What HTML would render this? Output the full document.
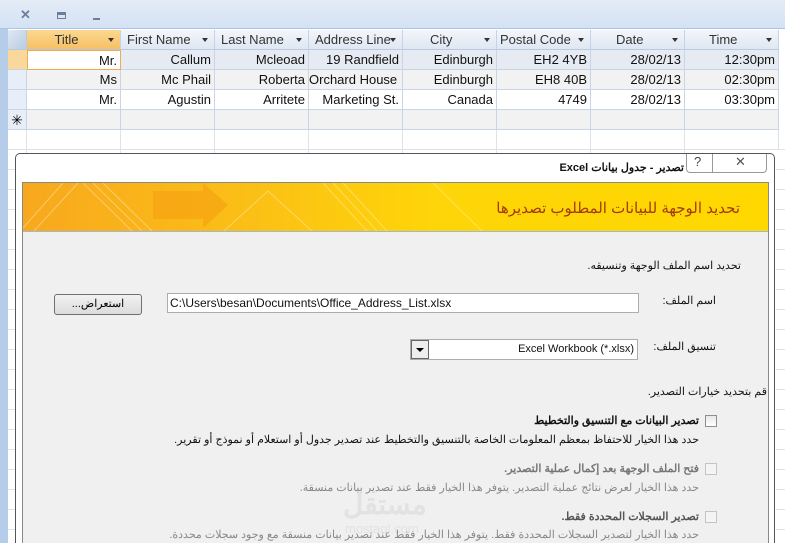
<!DOCTYPE html>
<html style="width:785px;height:543px;overflow:hidden"><head><meta charset="utf-8"><style>
*{margin:0;padding:0;box-sizing:border-box}
body{width:785px;height:543px;overflow:hidden;background:#fff;font-family:"Liberation Sans","Noto Sans CJK SC",sans-serif;position:relative}
.abs{position:absolute}
.top{left:0;top:0;width:785px;height:29px;background:linear-gradient(#e4ecf7,#d4e2f4);border-bottom:1px solid #a8c4e6}
.strip{left:0;top:29px;width:8px;height:514px;background:#b6cdea}
.hdr{top:30px;height:20px;background:linear-gradient(#f3f6fb,#dfe7f2);border-right:1px solid #c5d3e6;border-bottom:1px solid #b9c9de;font-size:13px;color:#333;line-height:19px;padding-left:6px}
.hdr:after{content:"";position:absolute;right:6px;top:8px;border:3.5px solid transparent;border-top:4px solid #333}
.c{height:20px;border-right:1px solid #c8d5e6;border-bottom:1px solid #c8d5e6;font-size:13px;line-height:19px;text-align:right;padding-right:3px;color:#111;white-space:nowrap;overflow:hidden}
.gl{left:8px;width:777px;height:1px;background:#dde3ea}
.vl{top:130px;width:1px;height:30px;background:#dde3ea}
.ar{font-family:"Liberation Sans","Noto Sans CJK SC",sans-serif;direction:rtl;font-size:11px;color:#111;white-space:nowrap;line-height:14px}
</style></head><body>
<div class="abs top"></div>
<div class="abs" style="left:20px;top:7px;font-size:13px;color:#6a7f9a;font-weight:bold">✕</div>
<div class="abs" style="left:57px;top:12px;width:9px;height:7px;border:1px solid #6a7f9a;border-top-width:3px"></div>
<div class="abs" style="left:93px;top:18px;width:7px;height:2px;background:#6a7f9a"></div>
<div class="abs strip"></div>
<div class="abs" style="left:8px;top:30px;width:19px;height:20px;background:linear-gradient(135deg,#dfe8f3,#b9cbe2);border-right:1px solid #b9c9de;border-bottom:1px solid #b9c9de"></div>
<div class="abs hdr" style="left:27px;width:94px;background:linear-gradient(#fbd88f,#f6c064);text-align:center;padding-left:0;padding-right:14px">Title</div>
<div class="abs hdr" style="left:121px;width:94px">First Name</div>
<div class="abs hdr" style="left:215px;width:94px">Last Name</div>
<div class="abs hdr" style="left:309px;width:94px;overflow:hidden;white-space:nowrap">Address Line</div>
<div class="abs hdr" style="left:403px;width:94px;padding-left:27px">City</div>
<div class="abs hdr" style="left:497px;width:94px;padding-left:3px">Postal Code</div>
<div class="abs hdr" style="left:591px;width:94px;padding-left:25px">Date</div>
<div class="abs hdr" style="left:685px;width:94px;padding-left:24px">Time</div>
<div class="abs" style="left:8px;top:50px;width:19px;height:20px;background:#fad79a;border-bottom:1px solid #c8d5e6"></div>
<div class="abs" style="left:8px;top:70px;width:19px;height:20px;background:#e8eef7;border-bottom:1px solid #c8d5e6;border-right:1px solid #c8d5e6"></div>
<div class="abs" style="left:8px;top:90px;width:19px;height:20px;background:#e8eef7;border-bottom:1px solid #c8d5e6;border-right:1px solid #c8d5e6"></div>
<div class="abs" style="left:8px;top:110px;width:19px;height:20px;background:#e8eef7;border-bottom:1px solid #c8d5e6;border-right:1px solid #c8d5e6;font-size:14px;text-align:center;line-height:20px">✳</div>
<div class="abs" style="left:27px;top:50px;width:752px;height:20px;background:#e6ebf3"></div>
<div class="abs" style="left:27px;top:70px;width:752px;height:20px;background:#f2f2f2"></div>
<div class="abs" style="left:27px;top:110px;width:752px;height:20px;background:#f2f2f2"></div>
<div class="abs c" style="left:27px;top:50px;width:94px;background:#fff;border:1px solid #f5a94d">Mr.</div>
<div class="abs c" style="left:121px;top:50px;width:94px">Callum</div>
<div class="abs c" style="left:215px;top:50px;width:94px">Mcleoad</div>
<div class="abs c" style="left:309px;top:50px;width:94px">19 Randfield</div>
<div class="abs c" style="left:403px;top:50px;width:94px">Edinburgh</div>
<div class="abs c" style="left:497px;top:50px;width:94px">EH2 4YB</div>
<div class="abs c" style="left:591px;top:50px;width:94px">28/02/13</div>
<div class="abs c" style="left:685px;top:50px;width:94px">12:30pm</div>
<div class="abs c" style="left:27px;top:70px;width:94px">Ms</div>
<div class="abs c" style="left:121px;top:70px;width:94px">Mc Phail</div>
<div class="abs c" style="left:215px;top:70px;width:94px">Roberta</div>
<div class="abs c" style="left:309px;top:70px;width:94px;text-align:left;padding-left:0">Orchard House</div>
<div class="abs c" style="left:403px;top:70px;width:94px">Edinburgh</div>
<div class="abs c" style="left:497px;top:70px;width:94px">EH8 40B</div>
<div class="abs c" style="left:591px;top:70px;width:94px">28/02/13</div>
<div class="abs c" style="left:685px;top:70px;width:94px">02:30pm</div>
<div class="abs c" style="left:27px;top:90px;width:94px">Mr.</div>
<div class="abs c" style="left:121px;top:90px;width:94px">Agustin</div>
<div class="abs c" style="left:215px;top:90px;width:94px">Arritete</div>
<div class="abs c" style="left:309px;top:90px;width:94px">Marketing St.</div>
<div class="abs c" style="left:403px;top:90px;width:94px">Canada</div>
<div class="abs c" style="left:497px;top:90px;width:94px">4749</div>
<div class="abs c" style="left:591px;top:90px;width:94px">28/02/13</div>
<div class="abs c" style="left:685px;top:90px;width:94px">03:30pm</div>
<div class="abs c" style="left:27px;top:110px;width:94px"></div><div class="abs c" style="left:121px;top:110px;width:94px"></div><div class="abs c" style="left:215px;top:110px;width:94px"></div><div class="abs c" style="left:309px;top:110px;width:94px"></div><div class="abs c" style="left:403px;top:110px;width:94px"></div><div class="abs c" style="left:497px;top:110px;width:94px"></div><div class="abs c" style="left:591px;top:110px;width:94px"></div><div class="abs c" style="left:685px;top:110px;width:94px"></div>
<div class="abs vl" style="left:26px"></div><div class="abs vl" style="left:120px"></div><div class="abs vl" style="left:214px"></div><div class="abs vl" style="left:308px"></div><div class="abs vl" style="left:402px"></div><div class="abs vl" style="left:496px"></div><div class="abs vl" style="left:590px"></div><div class="abs vl" style="left:684px"></div><div class="abs vl" style="left:778px"></div>
<div class="abs gl" style="top:149px"></div>
<div class="abs" style="left:776px;top:150px;width:9px;height:393px;background:repeating-linear-gradient(#fff 0 19px,#dde3ea 19px 20px)"></div>
<div class="abs" style="left:8px;top:150px;width:8px;height:393px;background:repeating-linear-gradient(#fff 0 19px,#dde3ea 19px 20px)"></div>
<div class="abs" style="left:15px;top:153px;width:760px;height:390px;background:#fff;border:1px solid #555;border-bottom:none;border-radius:5px 5px 0 0"></div>
<div class="abs" style="left:686px;top:154px;width:81px;height:19px;border:1px solid #999;border-top:none;border-radius:0 0 4px 4px;background:#fff"></div>
<div class="abs" style="left:712px;top:154px;width:1px;height:19px;background:#999"></div>
<div class="abs" style="left:694px;top:154px;font-size:13px;color:#444">?</div>
<div class="abs" style="left:735px;top:154px;font-size:13px;color:#555">✕</div>
<div class="abs ar" style="right:101px;top:161px;font-weight:bold;font-size:11px">تصدير - جدول بيانات Excel</div>
<div class="abs" style="left:22px;top:182px;width:747px;height:361px;background:#f0f0f0;border:1px solid #888;border-bottom:none"></div>
<div class="abs" style="left:23px;top:183px;width:745px;height:49px;background:linear-gradient(90deg,#f8a81e 0%,#fbbf16 30%,#fed508 55%,#ffd800 100%);overflow:hidden;border-bottom:1px solid #9cb8e0">
<svg width="745" height="49" style="position:absolute;left:0;top:0"><g stroke="#fff" stroke-opacity=".35" fill="none"><path d="M0 45 L40 0 M10 49 L55 0 M60 0 L110 49 M70 0 L120 49 M80 0 L130 49 M200 49 L245 8 L290 49 M300 0 L345 49 M310 0 L355 49 M320 0 L365 49 M410 0 L460 49"/></g><path d="M130 8 L180 8 L180 0 L205 22 L180 45 L180 36 L130 36Z" fill="#f39a10" fill-opacity=".5"/></svg>
<div class="ar" style="position:absolute;right:28px;top:17px;font-size:15px;line-height:18px;color:#a33a0a">تحديد الوجهة للبيانات المطلوب تصديرها</div>
</div>
<div class="abs ar" style="right:44px;top:259px">تحديد اسم الملف الوجهة وتنسيقه.</div>
<div class="abs ar" style="right:69px;top:294px">اسم الملف:</div>
<div class="abs" style="left:167px;top:293px;width:472px;height:20px;background:#fff;border:1px solid #abadb3;font-size:12px;line-height:18px;padding-left:2px;color:#111">C:\Users\besan\Documents\Office_Address_List.xlsx</div>
<div class="abs" style="left:54px;top:294px;width:88px;height:21px;border:1px solid #707070;border-radius:3px;background:linear-gradient(#f2f2f2,#dcdcdc);text-align:center;line-height:19px;font-size:11px;direction:rtl">استعراض...</div>
<div class="abs ar" style="right:69px;top:340px">تنسيق الملف:</div>
<div class="abs" style="left:410px;top:339px;width:228px;height:21px;background:#fff;border:1px solid #abadb3;font-size:11px;line-height:19px;text-align:right;padding-right:3px;color:#111">Excel Workbook (*.xlsx)</div>
<div class="abs" style="left:411px;top:340px;width:18px;height:19px;border:1px solid #666;background:#eee"></div>
<div class="abs" style="left:416px;top:348px;border:4px solid transparent;border-top:4px solid #000"></div>
<div class="abs ar" style="right:18px;top:385px">قم بتحديد خيارات التصدير.</div>
<div class="abs" style="left:705px;top:415px;width:12px;height:12px;border:1px solid #8f8f8f;background:linear-gradient(#e8e8e8,#fff)"></div>
<div class="abs ar" style="right:86px;top:414px;font-weight:bold">تصدير البيانات مع التنسيق والتخطيط</div>
<div class="abs ar" style="right:86px;top:433px">حدد هذا الخيار للاحتفاظ بمعظم المعلومات الخاصة بالتنسيق والتخطيط عند تصدير جدول أو استعلام أو نموذج أو تقرير.</div>
<div class="abs" style="left:705px;top:463px;width:12px;height:12px;border:1px solid #c4c4c4;background:#f4f4f4"></div>
<div class="abs ar" style="right:86px;top:462px;font-weight:bold;color:#777">فتح الملف الوجهة بعد إكمال عملية التصدير.</div>
<div class="abs ar" style="right:86px;top:481px;color:#888">حدد هذا الخيار لعرض نتائج عملية التصدير. يتوفر هذا الخيار فقط عند تصدير بيانات منسقة.</div>
<div class="abs" style="left:343px;top:488px;font-size:28px;font-weight:bold;color:#e2e2e2;direction:rtl">مستقل</div>
<div class="abs" style="left:345px;top:521px;font-size:13px;color:#e2e2e2">mostaql.com</div>
<div class="abs" style="left:705px;top:511px;width:12px;height:12px;border:1px solid #c4c4c4;background:#f4f4f4"></div>
<div class="abs ar" style="right:86px;top:510px;font-weight:bold;color:#555">تصدير السجلات المحددة فقط.</div>
<div class="abs ar" style="right:86px;top:528px;color:#888">حدد هذا الخيار لتصدير السجلات المحددة فقط. يتوفر هذا الخيار فقط عند تصدير بيانات منسقة مع وجود سجلات محددة.</div>
</body></html>
